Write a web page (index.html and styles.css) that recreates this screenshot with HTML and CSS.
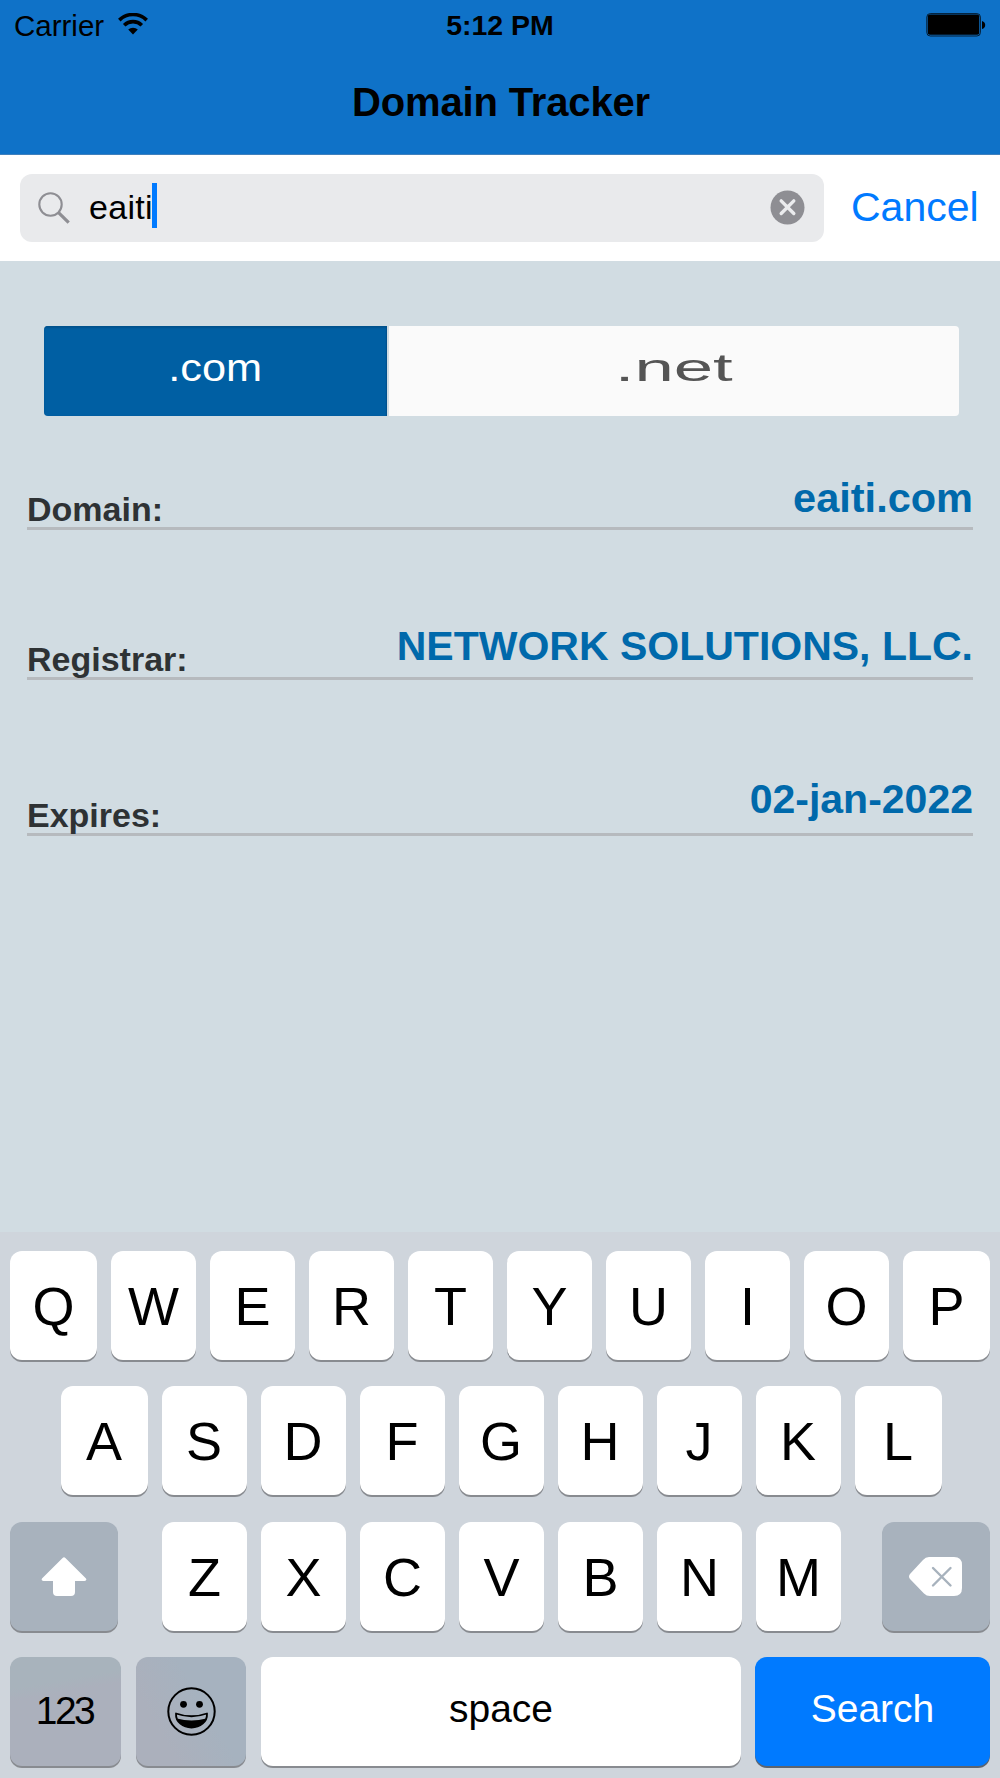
FILE: index.html
```html
<!DOCTYPE html>
<html lang="en">
<head>
    <meta charset="utf-8">
    <title>Domain Tracker</title>
    <meta name="viewport" content="width=device-width, initial-scale=1.0">
    <link rel="stylesheet" href="styles.css">
</head>
<body>
    <header class="header">
        <div class="status-bar">
            <div class="status-carrier">
                <span class="carrier-name">Carrier</span>
                <svg class="wifi-icon" width="30" height="22" viewBox="0 0 30 22" fill="none" stroke="#000" stroke-width="3.6">
                    <path d="M1.3 7.1a19.5 19.5 0 0 1 27.4 0"/>
                    <path d="M6.2 12.2a12.7 12.7 0 0 1 17.6 0"/>
                    <path d="M15 21.5l-4.8-4.9a7 7 0 0 1 9.6 0z" fill="#000" stroke="none"/>
                </svg>
            </div>
            <div class="status-time">5:12 PM</div>
            <div class="status-battery">
                <svg width="60" height="24" viewBox="0 0 60 24">
                    <rect x=".8" y=".6" width="53.6" height="22.4" rx="3.5" fill="none" stroke="#000" stroke-opacity=".75"/>
                    <rect x="1.8" y="1.6" width="51.4" height="20.2" rx="2" fill="#000"/>
                    <path d="M56 8q3.2 1 3.2 4t-3.2 4z" fill="#000"/>
                </svg>
            </div>
        </div>
        <h1 class="title">Domain Tracker</h1>
    </header>

    <div class="search-bar">
        <div class="search-field">
            <svg class="search-icon" width="32" height="32" viewBox="0 0 32 32" fill="none" stroke="#8e8e93">
                <circle cx="12.5" cy="12.5" r="11.2" stroke-width="2.1"/>
                <path d="M20.3 20.3l10.4 10.4" stroke-width="3.2"/>
            </svg>
            <span class="search-text">eaiti</span>
            <span class="caret"></span>
            <svg class="clear-icon" width="35" height="35" viewBox="0 0 35 35">
                <circle cx="17.5" cy="17.5" r="17" fill="#8e8e93"/>
                <path d="M11.2 10.9l12.6 12.6M23.8 10.9L11.2 23.5" stroke="#ebecee" stroke-width="3.4" stroke-linecap="round"/>
            </svg>
        </div>
        <div class="cancel">Cancel</div>
    </div>

    <main class="content">
        <div class="segments">
            <div class="segment active"><span class="segment-text">.com</span></div>
            <div class="segment"><span class="segment-text wide">.net</span></div>
        </div>

        <div class="detail">
            <span class="detail-label">Domain:</span>
            <span class="detail-value domain">eaiti.com</span>
        </div>
        <div class="detail registrar">
            <span class="detail-label">Registrar:</span>
            <span class="detail-value">NETWORK SOLUTIONS, LLC.</span>
        </div>
        <div class="detail expires">
            <span class="detail-label">Expires:</span>
            <span class="detail-value">02-jan-2022</span>
        </div>
    </main>

    <div class="keyboard">
        <div class="key-row">
            <div class="key edge">Q</div>
            <div class="key">W</div>
            <div class="key">E</div>
            <div class="key">R</div>
            <div class="key">T</div>
            <div class="key">Y</div>
            <div class="key">U</div>
            <div class="key">I</div>
            <div class="key">O</div>
            <div class="key edge">P</div>
        </div>
        <div class="key-row middle">
            <div class="key edge">A</div>
            <div class="key">S</div>
            <div class="key">D</div>
            <div class="key">F</div>
            <div class="key">G</div>
            <div class="key">H</div>
            <div class="key">J</div>
            <div class="key">K</div>
            <div class="key edge">L</div>
        </div>
        <div class="key-row">
            <div class="key dark shift">
                <svg width="46" height="39" viewBox="0 0 46 39">
                    <path d="M21.6.9q1.4-1.2 2.8 0L45 21.6q1.2 2.4-1.5 2.4H34v11q0 4-4 4H16q-4 0-4-4V24H2.5q-2.7 0-1.5-2.4z" fill="#fff"/>
                </svg>
            </div>
            <div class="key">Z</div>
            <div class="key">X</div>
            <div class="key">C</div>
            <div class="key">V</div>
            <div class="key">B</div>
            <div class="key">N</div>
            <div class="key">M</div>
            <div class="key dark delete">
                <svg width="54" height="39" viewBox="0 0 54 39">
                    <path d="M20 0h25q8 0 8 8v23q0 8-8 8H21q-3.5 0-6-2.500L1 22q-2-2.500 0-5L14 3q2.500-3 6-3z" fill="#fff"/>
                    <path d="M24 11l17.500 17.500M41.500 11L24 28.500" stroke="#a7b2bd" stroke-width="2.400" stroke-linecap="round"/>
                </svg>
            </div>
        </div>
        <div class="key-row">
            <div class="key dark numbers"><span class="numbers-text">123</span></div>
            <div class="key dark emoji">
                <svg width="49" height="49" viewBox="0 0 49 49">
                    <circle cx="24.5" cy="24.5" r="23.2" fill="none" stroke="#000" stroke-width="2"/>
                    <circle cx="16.5" cy="17.3" r="3.4"/>
                    <circle cx="32.5" cy="17.3" r="3.4"/>
                    <path d="M9 26.500q15.500 5.500 31 0C40.500 35 33 40.500 24.500 40.500S8.500 35 9 26.500z" fill="none" stroke="#000" stroke-width="1.800" stroke-linejoin="round"/>
                    <path d="M9.800 31.500q14.700 4 29.400 0C37 37.500 31 40.500 24.500 40.500S12 37.500 9.800 31.500z"/>
                </svg>
            </div>
            <div class="key space">space</div>
            <div class="key search">Search</div>
        </div>
    </div>
</body>
</html>
```
FILE: styles.css
```css
* {
    box-sizing: border-box;
}

body {
    margin: 0;
    width: 1000px;
    height: 1778px;
    display: flex;
    flex-direction: column;
    overflow: hidden;
    background-color: #d1dce2;
    color: #000;
    font-family: "Liberation Sans", Arial, Helvetica, sans-serif;
}

svg {
    display: block;
    flex: none;
}

/* Header */
.header {
    height: 155px;
    background-color: #0f72c8;
    border-bottom: 1px solid #3f80bd;
}

.status-bar {
    height: 51px;
    display: grid;
    grid-template-columns: 1fr auto 1fr;
    padding: 0 14px 0 14px;
    font-size: 29.5px;
    line-height: 51px;
}

.status-carrier {
    display: flex;
    gap: 14px;
}

.wifi-icon {
    margin-top: 13px;
}

.status-time {
    font-size: 28.5px;
    font-weight: bold;
}

.status-battery {
    display: flex;
    justify-content: flex-end;
    padding-top: 13px;
}

.title {
    margin: 0;
    padding-left: 2px;
    font-size: 40px;
    line-height: 103px;
    text-align: center;
    letter-spacing: -0.15px;
}

/* Search */
.search-bar {
    height: 106px;
    display: flex;
    padding: 19px 20px 0;
    background-color: #fff;
}

.search-field {
    width: 804px;
    height: 68px;
    display: flex;
    padding: 0 19px 0 18px;
    background-color: #e9eaec;
    border-radius: 12px;
}

.search-icon {
    margin-top: 18px;
}

.search-text {
    margin-left: 19px;
    font-size: 34px;
    line-height: 66px;
    letter-spacing: 0.3px;
}

.caret {
    width: 5px;
    height: 45px;
    margin: 9px 0 0 -1px;
    background-color: #007aff;
}

.clear-icon {
    margin: 16px 0 0 auto;
}

.cancel {
    margin-left: 27px;
    color: #007aff;
    font-size: 41px;
    line-height: 66px;
}

/* Content */
.content {
    height: 971px;
    padding: 65px 27px 0;
}

.segments {
    display: flex;
    gap: 2px;
    height: 90px;
    margin: 0 14px 0 17px;
    border-radius: 4px;
    overflow: hidden;
}

.segment {
    flex: 1;
    background-color: #fafafa;
    color: #555;
    font-size: 38px;
    line-height: 85px;
    text-align: center;
}

.segment.active {
    flex: none;
    width: 342.5px;
    background-color: #005fa3;
    box-shadow: inset 0 2px 2px #00528d, inset -1px 0 1px #00528d;
    color: #fff;
}

.segment-text {
    display: inline-block;
    transform: scaleX(1.14);
}

.segment-text.wide {
    transform: scaleX(1.86);
}

.detail {
    display: flex;
    justify-content: space-between;
    align-items: flex-end;
    height: 74px;
    margin-top: 40px;
    border-bottom: 3px solid #b6babe;
    font-weight: bold;
}

.detail-label {
    color: #2e3234;
    font-size: 34px;
    line-height: 35px;
}

.detail-value {
    color: #0069ab;
    font-size: 41px;
    line-height: 58px;
}

.detail-value.domain {
    font-size: 41.5px;
}

.detail.registrar {
    margin-top: 76px;
}

.registrar .detail-value {
    line-height: 61px;
}

.detail.expires {
    margin-top: 82px;
}

.expires .detail-value {
    line-height: 67px;
}

/* Keyboard */
.keyboard {
    flex: 1;
    display: flex;
    flex-direction: column;
    gap: 26.3px;
    padding: 19px 10px 0;
    background-color: #cfd5dc;
}

.key-row {
    display: flex;
    gap: 14px;
}

.key-row.middle {
    padding-left: 50.5px;
}

.key {
    width: 85px;
    height: 109px;
    display: flex;
    justify-content: center;
    background-color: #fff;
    border-radius: 12px;
    box-shadow: 0 2px 0 #888b90;
    font-size: 54px;
    line-height: 110px;
}

.key.edge {
    width: 87px;
}

.key.dark {
    align-items: center;
    background-color: #a8b2bd;
}

.key.shift {
    width: 108px;
    margin-right: 30px;
}

.key.delete {
    width: 108px;
    margin-left: 27px;
}

.key.numbers {
    width: 111px;
    background-image: linear-gradient(170deg, #a8b3bc 25%, #abb0bc 35%);
    font-size: 39px;
    letter-spacing: -2.5px;
}

.numbers-text {
    margin-right: 2px;
}

.key.emoji {
    width: 110px;
    margin-left: 1px;
    background-image: linear-gradient(60deg, #abb0bc 25%, #a6b2bf 60%);
}

.key.space {
    width: 480px;
    margin-left: 1px;
    font-size: 39px;
    line-height: 103px;
}

.key.search {
    width: 235px;
    background-color: #007aff;
    box-shadow: 0 2px 0 #5b6470;
    color: #fff;
    font-size: 39px;
    line-height: 103px;
}
```
